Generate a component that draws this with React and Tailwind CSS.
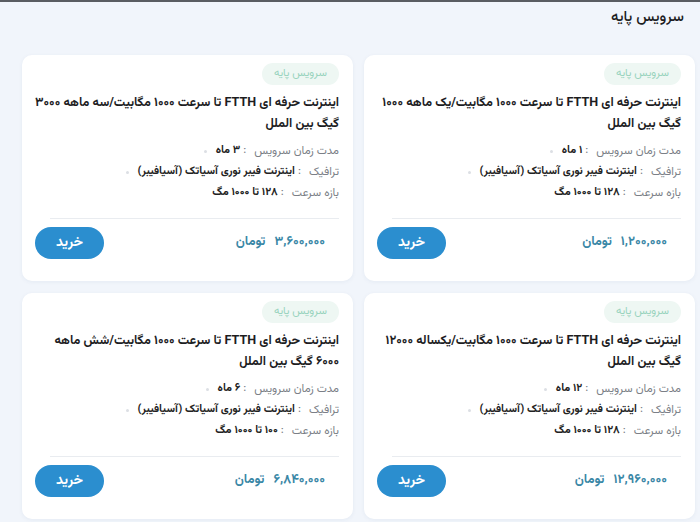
import React from "react";

const FONT = { fontFamily: '"Vazirmatn", "Noto Sans Arabic", "DejaVu Sans", sans-serif' };

const plans = [
  {
    line1: "اینترنت حرفه ای FTTH تا سرعت ۱۰۰۰ مگابیت/یک ماهه ۱۰۰۰",
    line2: "گیگ بین الملل",
    duration: "۱ ماه",
    speed: "۱۲۸ تا ۱۰۰۰ مگ",
    price: "۱,۲۰۰,۰۰۰",
  },
  {
    line1: "اینترنت حرفه ای FTTH تا سرعت ۱۰۰۰ مگابیت/سه ماهه ۳۰۰۰",
    line2: "گیگ بین الملل",
    duration: "۳ ماه",
    speed: "۱۲۸ تا ۱۰۰۰ مگ",
    price: "۳,۶۰۰,۰۰۰",
  },
  {
    line1: "اینترنت حرفه ای FTTH تا سرعت ۱۰۰۰ مگابیت/یکساله ۱۲۰۰۰",
    line2: "گیگ بین الملل",
    duration: "۱۲ ماه",
    speed: "۱۲۸ تا ۱۰۰۰ مگ",
    price: "۱۲,۹۶۰,۰۰۰",
  },
  {
    line1: "اینترنت حرفه ای FTTH تا سرعت ۱۰۰۰ مگابیت/شش ماهه",
    line2: "۶۰۰۰ گیگ بین الملل",
    duration: "۶ ماه",
    speed: "۱۰۰ تا ۱۰۰۰ مگ",
    price: "۶,۸۴۰,۰۰۰",
  },
];

const Row = ({ label, value, dot }) => (
  <div className="flex items-center h-[21px]">
    <span className="text-[#7b7f87] text-[11.5px]">{label}</span>
    <span className="text-[#7b7f87] text-[11px] mr-[8px] ml-[3px]">:</span>
    <span className="font-bold text-[#222] text-[11px]">{value}</span>
    {dot && <span className="w-[3px] h-[3px] rounded-full bg-[#dcdfe4] mr-[9px]" />}
  </div>
);

const PlanCard = ({ plan }) => (
  <div className="bg-white rounded-[10px] shadow-[0_1px_4px_rgba(30,60,120,0.06)] pt-[8px] pb-[22px] pr-[14px] pl-[13px] flex flex-col">
    <div className="flex">
      <span className="h-[22px] px-[12px] rounded-full bg-[#eef7f3] text-[#98d3bd] text-[11px] flex items-center">
        سرویس پایه
      </span>
    </div>
    <h3 className="mt-[8px] text-[12.6px] font-bold leading-[21px] text-[#1d1d1f] whitespace-nowrap">
      {plan.line1}
      <br />
      {plan.line2}
    </h3>
    <div className="mt-[6px] flex flex-col">
      <Row label="مدت زمان سرویس" value={plan.duration} dot />
      <Row label="ترافیک" value="اینترنت فیبر نوری آسیاتک (آسیافیبر)" dot />
      <Row label="بازه سرعت" value={plan.speed} />
    </div>
    <div className="mt-[14px] h-px bg-[#e9ecf0] ml-[15px]" />
    <div className="mt-[8px] flex items-center justify-between">
      <div className="pr-[14px] flex items-center gap-[9px] text-[13px] font-bold text-[#3a87a6]">
        <span>{plan.price}</span>
        <span>تومان</span>
      </div>
      <button className="w-[69px] h-[32px] rounded-full bg-[#2b8ecf] text-white text-[14px] font-bold">
        خرید
      </button>
    </div>
  </div>
);

export default function App() {
  return (
    <div dir="rtl" style={FONT} className="w-[700px] h-[522px] overflow-hidden bg-[#f1f5fb] border-t-2 border-[#5a5d62]">
      <div className="pr-[16px] pt-[6px] h-[52px]">
        <h2 className="text-[15px] font-medium text-[#1d1d1f] leading-[20px]">سرویس پایه</h2>
      </div>
      <div className="grid grid-cols-2 gap-x-[11px] gap-y-[12px] pr-[5px] pl-[22px] mt-[1px]">
        {plans.map((p, i) => (
          <PlanCard key={i} plan={p} />
        ))}
      </div>
    </div>
  );
}
